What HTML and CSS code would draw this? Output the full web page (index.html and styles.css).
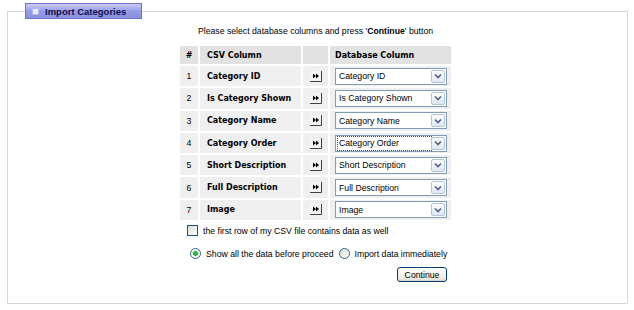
FILE: index.html
```html
<!DOCTYPE html>
<html lang="en">
<head>
  <meta charset="UTF-8">
  <title>Import Categories</title>
  <link rel="stylesheet" href="styles.css">
</head>
<body>
  <fieldset class="box">
    <legend class="tab"><span class="tab-icon"></span>Import Categories</legend>

    <div class="form">
      <p class="hint">Please select database columns and press '<b>Continue</b>' button</p>

      <table class="map">
        <tr>
          <th class="num">#</th>
          <th class="csv">CSV Column</th>
          <th class="go"></th>
          <th class="db">Database Column</th>
        </tr>
        <tr>
          <td class="num">1</td>
          <td class="csv">Category ID</td>
          <td class="go"><svg class="arrow" width="12" height="11" viewBox="0 0 12 11"><rect x="0" y="0" width="11" height="10" fill="#f4f4f4"/><path d="M3 2.5 L6 5 L3 7.5 Z M6 2.5 L9 5 L6 7.5 Z" fill="#000"/><path d="M0 10.5 H11.5 V0" stroke="#404040" fill="none"/></svg></td>
          <td class="db"><div class="combo"><select><option>Category ID</option></select><span class="drop"><svg width="8" height="6" viewBox="0 0 8 6"><path d="M1 1.5 L4 4.5 L7 1.5" stroke="#4d6185" stroke-width="1.6" fill="none"/></svg></span></div></td>
        </tr>
        <tr>
          <td class="num">2</td>
          <td class="csv">Is Category Shown</td>
          <td class="go"><svg class="arrow" width="12" height="11" viewBox="0 0 12 11"><rect x="0" y="0" width="11" height="10" fill="#f4f4f4"/><path d="M3 2.5 L6 5 L3 7.5 Z M6 2.5 L9 5 L6 7.5 Z" fill="#000"/><path d="M0 10.5 H11.5 V0" stroke="#404040" fill="none"/></svg></td>
          <td class="db"><div class="combo"><select><option>Is Category Shown</option></select><span class="drop"><svg width="8" height="6" viewBox="0 0 8 6"><path d="M1 1.5 L4 4.5 L7 1.5" stroke="#4d6185" stroke-width="1.6" fill="none"/></svg></span></div></td>
        </tr>
        <tr>
          <td class="num">3</td>
          <td class="csv">Category Name</td>
          <td class="go"><svg class="arrow" width="12" height="11" viewBox="0 0 12 11"><rect x="0" y="0" width="11" height="10" fill="#f4f4f4"/><path d="M3 2.5 L6 5 L3 7.5 Z M6 2.5 L9 5 L6 7.5 Z" fill="#000"/><path d="M0 10.5 H11.5 V0" stroke="#404040" fill="none"/></svg></td>
          <td class="db"><div class="combo"><select><option>Category Name</option></select><span class="drop"><svg width="8" height="6" viewBox="0 0 8 6"><path d="M1 1.5 L4 4.5 L7 1.5" stroke="#4d6185" stroke-width="1.6" fill="none"/></svg></span></div></td>
        </tr>
        <tr>
          <td class="num">4</td>
          <td class="csv">Category Order</td>
          <td class="go"><svg class="arrow" width="12" height="11" viewBox="0 0 12 11"><rect x="0" y="0" width="11" height="10" fill="#f4f4f4"/><path d="M3 2.5 L6 5 L3 7.5 Z M6 2.5 L9 5 L6 7.5 Z" fill="#000"/><path d="M0 10.5 H11.5 V0" stroke="#404040" fill="none"/></svg></td>
          <td class="db"><div class="combo focused"><select><option>Category Order</option></select><span class="drop"><svg width="8" height="6" viewBox="0 0 8 6"><path d="M1 1.5 L4 4.5 L7 1.5" stroke="#4d6185" stroke-width="1.6" fill="none"/></svg></span></div></td>
        </tr>
        <tr>
          <td class="num">5</td>
          <td class="csv">Short Description</td>
          <td class="go"><svg class="arrow" width="12" height="11" viewBox="0 0 12 11"><rect x="0" y="0" width="11" height="10" fill="#f4f4f4"/><path d="M3 2.5 L6 5 L3 7.5 Z M6 2.5 L9 5 L6 7.5 Z" fill="#000"/><path d="M0 10.5 H11.5 V0" stroke="#404040" fill="none"/></svg></td>
          <td class="db"><div class="combo"><select><option>Short Description</option></select><span class="drop"><svg width="8" height="6" viewBox="0 0 8 6"><path d="M1 1.5 L4 4.5 L7 1.5" stroke="#4d6185" stroke-width="1.6" fill="none"/></svg></span></div></td>
        </tr>
        <tr>
          <td class="num">6</td>
          <td class="csv">Full Description</td>
          <td class="go"><svg class="arrow" width="12" height="11" viewBox="0 0 12 11"><rect x="0" y="0" width="11" height="10" fill="#f4f4f4"/><path d="M3 2.5 L6 5 L3 7.5 Z M6 2.5 L9 5 L6 7.5 Z" fill="#000"/><path d="M0 10.5 H11.5 V0" stroke="#404040" fill="none"/></svg></td>
          <td class="db"><div class="combo"><select><option>Full Description</option></select><span class="drop"><svg width="8" height="6" viewBox="0 0 8 6"><path d="M1 1.5 L4 4.5 L7 1.5" stroke="#4d6185" stroke-width="1.6" fill="none"/></svg></span></div></td>
        </tr>
        <tr>
          <td class="num">7</td>
          <td class="csv">Image</td>
          <td class="go"><svg class="arrow" width="12" height="11" viewBox="0 0 12 11"><rect x="0" y="0" width="11" height="10" fill="#f4f4f4"/><path d="M3 2.5 L6 5 L3 7.5 Z M6 2.5 L9 5 L6 7.5 Z" fill="#000"/><path d="M0 10.5 H11.5 V0" stroke="#404040" fill="none"/></svg></td>
          <td class="db"><div class="combo"><select><option>Image</option></select><span class="drop"><svg width="8" height="6" viewBox="0 0 8 6"><path d="M1 1.5 L4 4.5 L7 1.5" stroke="#4d6185" stroke-width="1.6" fill="none"/></svg></span></div></td>
        </tr>
      </table>

      <label class="check"><input type="checkbox"> the first row of my CSV file contains data as well</label>

      <div class="modes">
        <label class="opt"><input type="radio" name="mode" checked> Show all the data before proceed</label>
        <label class="opt"><input type="radio" name="mode"> Import data immediately</label>
      </div>

      <div class="actions">
        <button class="btn">Continue</button>
      </div>
    </div>
  </fieldset>
</body>
</html>
```

FILE: styles.css
```css
body {
  margin: 0;
  background: #fff;
  color: #000;
  font-family: "Liberation Sans", Arial, sans-serif;
  font-size: 8.7px;
}
.box {
  box-sizing: border-box;
  width: 621px;
  height: 301px;
  margin: 3px 0 0 7px;
  padding: 0 4px 0 0;
  border: 1px solid #d6d6d6;
}
.tab {
  box-sizing: border-box;
  width: 117px;
  height: 16px;
  margin-left: 17px;
  padding: 0 0 0 6px;
  display: flex;
  align-items: center;
  border: 1px solid #6e74cc;
  background: linear-gradient(#c9ccf6, #9399e6 55%, #8a90e0);
  font-weight: bold;
  font-size: 9.5px;
  color: #10104a;
}
.tab-icon {
  width: 5px;
  height: 5px;
  margin-right: 6px;
  background: #e8e8f8;
  border: 1px solid #b4b8ee;
}
.form {
  width: 275px;
  margin: 0 auto;
}
.hint {
  margin: 7px 0 0;
  text-align: center;
  white-space: nowrap;
}
.map {
  margin-top: 8px;
  border-collapse: separate;
  border-spacing: 2px;
  width: 275px;
}
.map th, .map td {
  padding: 0;
  background: #efefef;
  text-align: left;
  white-space: nowrap;
}
.map th {
  height: 18px;
  background: #e2e2e2;
  font-family: "DejaVu Sans", Verdana, sans-serif;
  font-size: 8px;
  font-weight: bold;
}
.map td {
  height: 20.3px;
}
.map td.csv {
  font-family: "DejaVu Sans", Verdana, sans-serif;
  font-size: 8px;
  font-weight: bold;
}
.num {
  width: 18px;
  text-align: center !important;
}
.csv {
  width: 94px;
  padding-left: 7px !important;
}
.go {
  width: 25px;
  text-align: center !important;
}
.arrow {
  display: block;
  margin: 0 auto;
}
.db {
  padding-left: 5px !important;
}
.combo {
  box-sizing: border-box;
  width: 112px;
  height: 17px;
  display: flex;
  align-items: center;
  border: 1px solid #7f9db9;
  background: #fff;
}
.combo select {
  flex: 1;
  min-width: 0;
  height: 13px;
  margin-left: 2px;
  padding: 0 1px;
  border: none;
  appearance: none;
  background: transparent;
  font-family: "Liberation Sans", Arial, sans-serif;
  font-size: 8.7px;
  color: #000;
}
.combo.focused select {
  outline: 1px dotted #444;
}
.drop {
  box-sizing: border-box;
  width: 14px;
  height: 13px;
  margin-right: 1px;
  display: flex;
  align-items: center;
  justify-content: center;
  border: 1px solid #b3c3dc;
  border-radius: 2px;
  background: linear-gradient(#fdfdfe, #dfe6f3);
}
.check {
  display: flex;
  align-items: center;
  gap: 5px;
  margin: 3px 0 0 9px;
}
.check input {
  appearance: none;
  width: 11px;
  height: 11px;
  margin: 0;
  border: 1px solid #1c5180;
  background: linear-gradient(135deg, #dcdcd6, #fff);
}
.modes {
  display: flex;
  gap: 5px;
  margin: 12px 0 0 12px;
}
.opt {
  display: flex;
  align-items: center;
  gap: 5px;
}
.opt input {
  appearance: none;
  width: 11px;
  height: 11px;
  margin: 0;
  border: 1px solid #2f5f8c;
  border-radius: 50%;
  background: linear-gradient(135deg, #dcdcd6, #fff);
}
.opt input:checked {
  background: radial-gradient(circle, #2fb12f 0 2px, #a8e0a8 2.5px, #fff 3.5px);
}
.actions {
  display: flex;
  justify-content: flex-end;
  margin: 8px 6px 0 0;
}
.btn {
  box-sizing: border-box;
  width: 50px;
  height: 15px;
  padding: 0;
  border: 1px solid #003c74;
  border-radius: 3px;
  background: linear-gradient(#fff, #ece9e0 85%, #d6d0c5);
  font-family: "Liberation Sans", Arial, sans-serif;
  font-size: 8.7px;
  color: #000;
}
```
